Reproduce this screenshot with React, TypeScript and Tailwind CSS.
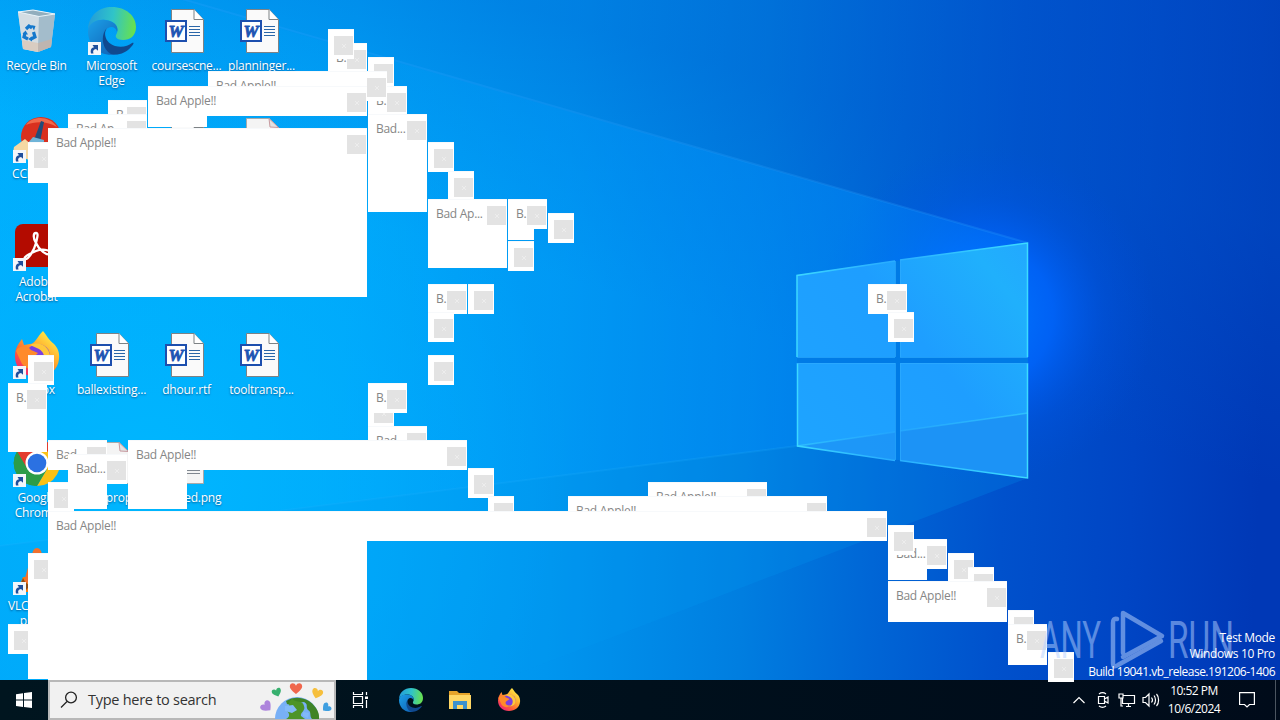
import React from 'react';

interface PopupWindow {
  x: number;
  y: number;
  w: number;
  h: number;
  title?: string;
  noButton?: boolean;
}

interface DesktopItem {
  label: string;
  icon: React.ReactNode;
  shortcut?: boolean;
}

// back to front
const windows: PopupWindow[] = [
  { x: 368, y: 57, w: 26, h: 30 },
  { x: 328, y: 43, w: 39, h: 30, title: 'B.' },
  { x: 328, y: 29, w: 26, h: 30 },
  { x: 368, y: 86, w: 39, h: 30, title: 'B.' },
  { x: 208, y: 71, w: 179, h: 30, title: 'Bad Apple!!' },
  { x: 108, y: 100, w: 39, h: 30, title: 'B.' },
  { x: 68, y: 114, w: 79, h: 30, title: 'Bad Ap...' },
  { x: 148, y: 86, w: 59, h: 41, noButton: true },
  { x: 148, y: 86, w: 219, h: 30, title: 'Bad Apple!!' },
  { x: 28, y: 142, w: 26, h: 41 },
  { x: 48, y: 128, w: 319, h: 169, title: 'Bad Apple!!' },
  { x: 368, y: 114, w: 59, h: 98, title: 'Bad...' },
  { x: 428, y: 142, w: 26, h: 30 },
  { x: 448, y: 171, w: 26, h: 30 },
  { x: 428, y: 199, w: 79, h: 69, title: 'Bad Ap...' },
  { x: 508, y: 199, w: 26, h: 41, noButton: true },
  { x: 508, y: 199, w: 39, h: 30, title: 'B.' },
  { x: 548, y: 213, w: 26, h: 30 },
  { x: 508, y: 241, w: 26, h: 30 },
  { x: 428, y: 284, w: 39, h: 30, title: 'B.' },
  { x: 468, y: 284, w: 26, h: 30 },
  { x: 868, y: 284, w: 39, h: 30, title: 'B.' },
  { x: 428, y: 312, w: 26, h: 30 },
  { x: 888, y: 312, w: 26, h: 30 },
  { x: 28, y: 355, w: 26, h: 30 },
  { x: 428, y: 355, w: 26, h: 30 },
  { x: 8, y: 383, w: 39, h: 69, title: 'B.' },
  { x: 368, y: 397, w: 26, h: 30 },
  { x: 368, y: 383, w: 39, h: 30, title: 'B.' },
  { x: 368, y: 426, w: 59, h: 30, title: 'Bad...' },
  { x: 48, y: 440, w: 59, h: 30, title: 'Bad...' },
  { x: 128, y: 440, w: 59, h: 69, noButton: true },
  { x: 128, y: 440, w: 339, h: 30, title: 'Bad Apple!!' },
  { x: 48, y: 482, w: 26, h: 30 },
  { x: 68, y: 454, w: 39, h: 55, noButton: true },
  { x: 68, y: 454, w: 59, h: 30, title: 'Bad...' },
  { x: 468, y: 468, w: 26, h: 30 },
  { x: 648, y: 482, w: 119, h: 30, title: 'Bad Apple!!' },
  { x: 488, y: 496, w: 26, h: 30 },
  { x: 568, y: 496, w: 259, h: 30, title: 'Bad Apple!!' },
  { x: 8, y: 624, w: 26, h: 30 },
  { x: 28, y: 553, w: 26, h: 126 },
  { x: 48, y: 511, w: 319, h: 169, noButton: true },
  { x: 48, y: 511, w: 839, h: 30, title: 'Bad Apple!!' },
  { x: 888, y: 539, w: 39, h: 41, noButton: true },
  { x: 888, y: 539, w: 59, h: 30, title: 'Bad...' },
  { x: 888, y: 525, w: 26, h: 30 },
  { x: 948, y: 553, w: 26, h: 30 },
  { x: 968, y: 567, w: 26, h: 30 },
  { x: 888, y: 581, w: 119, h: 41, title: 'Bad Apple!!' },
  { x: 1008, y: 610, w: 26, h: 30 },
  { x: 1008, y: 624, w: 39, h: 41, title: 'B.' },
  { x: 1048, y: 652, w: 26, h: 30 },
];

function Popup({ x, y, w, h, title, noButton }: PopupWindow) {
  return (
    <div
      className="absolute overflow-hidden border-t border-[#f7f9fb] bg-white"
      style={{ left: x, top: y, width: w, height: h }}
    >
      <div className="flex items-start justify-between pt-[6px] pr-px">
        <span className="-mt-px w-0 indent-2 text-[12px] leading-[17px] tracking-[-0.28px] whitespace-nowrap text-[#868686]">
          {title}
        </span>
        {!noButton && (
          <span className="flex h-[19px] w-[19px] shrink-0 items-center justify-center bg-[#e3e3e3]">
            <svg viewBox="0 0 6 6" className="h-[6px] w-[6px]" stroke="#ededed" fill="none">
              <path d="M1 1l4 4M5 1L1 5" />
            </svg>
          </span>
        )}
      </div>
    </div>
  );
}

function Wallpaper() {
  return (
    <svg viewBox="0 0 1280 720" className="absolute inset-0 h-[720px] w-[1280px]">
      <defs>
        <linearGradient id="base" x1="0" y1="0" x2="1280" y2="60" gradientUnits="userSpaceOnUse">
          <stop offset="0" stopColor="#00aefd" />
          <stop offset="0.28" stopColor="#00a6f9" />
          <stop offset="0.45" stopColor="#0096ef" />
          <stop offset="0.6" stopColor="#007ee0" />
          <stop offset="0.7" stopColor="#0066d6" />
          <stop offset="0.8" stopColor="#0051cc" />
          <stop offset="0.9" stopColor="#0045c4" />
          <stop offset="1" stopColor="#0038b6" />
        </linearGradient>
        <linearGradient id="topShade" x1="500" y1="0" x2="430" y2="240" gradientUnits="userSpaceOnUse">
          <stop offset="0" stopColor="#0058cc" stopOpacity="0.35" />
          <stop offset="1" stopColor="#0058cc" stopOpacity="0" />
        </linearGradient>
        <radialGradient id="leftGlow" cx="150" cy="480" r="420" gradientUnits="userSpaceOnUse">
          <stop offset="0" stopColor="#00b8ff" stopOpacity="0.9" />
          <stop offset="1" stopColor="#00b0ff" stopOpacity="0" />
        </radialGradient>
        <radialGradient id="logoGlow" cx="985" cy="315" r="170" gradientUnits="userSpaceOnUse">
          <stop offset="0" stopColor="#0078ff" />
          <stop offset="0.4" stopColor="#0066ff" stopOpacity="0.8" />
          <stop offset="0.7" stopColor="#0058ec" stopOpacity="0.3" />
          <stop offset="1" stopColor="#0050e0" stopOpacity="0" />
        </radialGradient>
        <linearGradient id="beam" x1="200" y1="0" x2="1028" y2="0" gradientUnits="userSpaceOnUse">
          <stop offset="0" stopColor="#00b4ff" stopOpacity="0.1" />
          <stop offset="0.6" stopColor="#0096ff" stopOpacity="0.7" />
          <stop offset="0.8" stopColor="#0090ff" stopOpacity="0.8" />
          <stop offset="1" stopColor="#0078ff" stopOpacity="0.6" />
        </linearGradient>
        <linearGradient id="pane" x1="797" y1="450" x2="1028" y2="260" gradientUnits="userSpaceOnUse">
          <stop offset="0" stopColor="#1ea4ff" />
          <stop offset="0.55" stopColor="#1e9eff" />
          <stop offset="0.88" stopColor="#20b0fc" />
          <stop offset="1" stopColor="#22aafe" />
        </linearGradient>
        <linearGradient id="edge" x1="797" y1="0" x2="1028" y2="0" gradientUnits="userSpaceOnUse">
          <stop offset="0" stopColor="#3cd8ff" />
          <stop offset="0.4" stopColor="#28acff" />
          <stop offset="1" stopColor="#3cdcff" />
        </linearGradient>
      </defs>
      <rect width="1280" height="720" fill="url(#base)" />
      <rect width="1280" height="720" fill="url(#topShade)" />
      <rect width="1280" height="720" fill="url(#leftGlow)" />
      <rect width="1280" height="720" fill="url(#logoGlow)" />
      <path d="M180 0L1028 243V478L797 446L0 546V0Z" fill="url(#beam)" opacity="0.6" />
      <path d="M130 -16L1028 243" stroke="#2aa4ff" strokeOpacity="0.25" strokeWidth="2" />
      <path d="M0 546L797 446" stroke="#2ab4ff" strokeOpacity="0.2" strokeWidth="2" />
      <path d="M797 446L1028 478L610 638L395 720H0V546Z" fill="#009af0" opacity="0.22" />
      <path d="M797 275L1028 243V478L797 446Z" fill="#007be6" />
      <path d="M797 275L895 261V357H797Z" fill="url(#pane)" />
      <path d="M900 260L1028 243V357H900Z" fill="url(#pane)" />
      <path d="M797 363H895V460L797 446Z" fill="url(#pane)" />
      <path d="M900 363H1028V478L900 460Z" fill="url(#pane)" />
      <path d="M797 446L895 432V460Z" fill="#1c90f4" opacity="0.6" />
      <path d="M900 431L1028 413V478L900 460Z" fill="#1c90f4" opacity="0.8" />
      <g stroke="url(#edge)" strokeWidth="1.5" fill="none">
        <path d="M895 261L797 275.500V357" />
        <path d="M900 260L1027.500 243V357" />
        <path d="M797.500 363V446L895 460.500" />
        <path d="M1027.500 363V478L900 460.500" />
        <path d="M797 446L895 432M900 431L1028 413" opacity="0.55" />
      </g>
      <g stroke="#2eacff" strokeWidth="1" opacity="0.7">
        <path d="M797 357.500H895M900 357.500H1028M797 363.500H895M900 363.500H1028" />
        <path d="M895.500 261V357M900.500 260V357M895.500 363V460M900.500 363V460" />
      </g>
    </svg>
  );
}

function RecycleBinIcon() {
  return (
    <svg viewBox="0 0 48 48" className="h-12 w-12">
      <path d="M5 5L20 3L42 7L38 40L25 45L10 42Z" fill="#b9d3e2" />
      <path d="M5 5L26 9L25 45L10 42Z" fill="#d3dde3" />
      <path d="M26 9L42 7L38 40L25 45Z" fill="#a3bccb" />
      <path d="M9 33L25 36L24.800 45L10 42Z" fill="#d9c8b8" opacity="0.8" />
      <path d="M25 36L39 32L38 40L25 45Z" fill="#c4b3a9" opacity="0.8" />
      <path d="M5 5L20 3L42 7L26 9.500Z" fill="#92aebd" stroke="#e9f4fa" strokeWidth="1" />
      <g fill="none" stroke="#1478cc" strokeWidth="3.200">
        <path d="M13 22L16 19L19 21" />
        <path d="M20.500 25L22 30L18 32" />
        <path d="M15 32L11 30L12 26" />
      </g>
      <path d="M18 18l4.500 1-1.500 4.500zM19 29.500v5l-4-2.500zM9.500 27l3-3.500 2.500 4z" fill="#1478cc" />
    </svg>
  );
}

function EdgeIcon({ id, className }: { id: string; className: string }) {
  return (
    <svg viewBox="0 0 48 48" className={className}>
      <defs>
        <linearGradient id={`${id}-top`} x1="2" y1="14" x2="46" y2="20" gradientUnits="userSpaceOnUse">
          <stop offset="0" stopColor="#249fd8" />
          <stop offset="0.5" stopColor="#30c4c8" />
          <stop offset="1" stopColor="#66e052" />
        </linearGradient>
        <linearGradient id={`${id}-low`} x1="0" y1="18" x2="30" y2="48" gradientUnits="userSpaceOnUse">
          <stop offset="0" stopColor="#1b9be4" />
          <stop offset="1" stopColor="#0f5fb4" />
        </linearGradient>
      </defs>
      <path d="M0 22C1 8 11 0 24 0C38 0 48 9 48 20C48 29 42 33 35 33C29 33 27 30 28 28C32 22 28 14 18 13C9 12 2 17 0 22Z" fill={`url(#${id}-top)`} />
      <path d="M0 24C1 16 8 12 17 13C27 14 31 20 29 25C28 20 22 18 18 23C12 31 18 45 30 47C12 51 0 39 0 24Z" fill={`url(#${id}-low)`} />
      <path d="M19 21C15 26 17 36 27 39C34 41 40 39 44 36C47 35 45 38 43 40C38 46 30 49 23 47C14 42 12 28 19 21Z" fill="#10498f" />
    </svg>
  );
}

function WordIcon() {
  return (
    <svg viewBox="0 0 48 48" className="h-12 w-12">
      <path d="M8.500 2.500H31L40.500 12.500V45.500H8.500Z" fill="#fafafa" stroke="#7d8285" />
      <path d="M31 2.500V12.500H40.500" fill="#fff" stroke="#7d8285" />
      <path d="M26 19.500H37M26 22.500H37M26 25.500H37M26 28.500H37" stroke="#2a66a8" />
      <rect x="3" y="14" width="20" height="20" fill="#fff" stroke="#1d4fae" strokeWidth="2" />
      <text x="13" y="30" textAnchor="middle" fontFamily="Liberation Serif, serif" fontSize="17" fontWeight="700" fontStyle="italic" fill="#1e55b3" stroke="#1e55b3" strokeWidth="0.800">W</text>
    </svg>
  );
}

function ImageFileIcon() {
  return (
    <svg viewBox="0 0 48 48" className="h-12 w-12">
      <path d="M8.500 3.500H31L40.500 12.500V44.500H8.500Z" fill="#f4f4f4" stroke="#a9a9a9" />
      <path d="M31 3.500L32 12L40.500 12.500Z" fill="#e2e2e2" stroke="#c79aa0" />
      <path d="M12 31.500H37M12 34.500H37" stroke="#80878f" />
    </svg>
  );
}

function CCleanerIcon() {
  return (
    <svg viewBox="0 0 48 48" className="h-12 w-12">
      <circle cx="28" cy="22" r="20" fill="#d9301f" />
      <path d="M13 10C19 1 36 0 44 12C35 6 22 6 13 10Z" fill="#f06a4c" />
      <path d="M28 6L21 25L27 27L31 7Z" fill="#224c79" />
      <path d="M20 22L31 25L30 36L10 34Z" fill="#6fb4d8" />
      <path d="M1 32L12 24L24 35L18 46L0 38Z" fill="#f5d9a4" />
    </svg>
  );
}

function AcrobatIcon() {
  return (
    <svg viewBox="0 0 48 48" className="h-12 w-12">
      <rect x="2" y="1" width="45" height="43" rx="8" fill="#b30b00" />
      <path d="M23 10C20 10 20 15 23 20C26 27 34 33 37 31C40 28 31 25 23 28C16 31 10 34 12 36C15 37 21 28 23 20C24 15 26 10 23 10Z" fill="none" stroke="#fff" strokeWidth="2.300" />
    </svg>
  );
}

function FirefoxIcon({ id, className }: { id: string; className: string }) {
  return (
    <svg viewBox="0 0 48 48" className={className}>
      <defs>
        <linearGradient id={id} x1="40" y1="4" x2="8" y2="42" gradientUnits="userSpaceOnUse">
          <stop offset="0" stopColor="#fff04a" />
          <stop offset="0.4" stopColor="#ffa72c" />
          <stop offset="0.7" stopColor="#ff5f35" />
          <stop offset="1" stopColor="#f0247a" />
        </linearGradient>
      </defs>
      <path d="M30 0C34 5 36 9 41 13C44 16 47 21 46 28C45 39 36 46 24 46C11 46 2 37 2 25C2 18 5 13 9 8L11 14L17 13C22 13 24 6 30 0Z" fill={`url(#${id})`} />
      <circle cx="25" cy="25" r="12" fill="#7c3fe0" />
      <path d="M17 14C26 10 35 14 37 24C38 33 31 38 24 37C33 34 34 23 26 18Z" fill="#ffc83a" />
      <path d="M3 20C6 14 14 14 18 19L25 22C22 26 18 25 17 29C17 34 23 36 28 34C24 40 14 40 9 33Z" fill="#ff8a2a" />
    </svg>
  );
}

function ChromeIcon() {
  return (
    <svg viewBox="0 0 48 48" className="h-12 w-12">
      <path d="M24 24L4 12.500A23 23 0 0 1 44 12.500Z" fill="#e33b2e" />
      <path d="M24 24L4 12.500A23 23 0 0 0 24 47Z" fill="#2c9c48" />
      <path d="M24 24L34 30L24 47A23 23 0 0 0 44 12.500H24Z" fill="#fbc116" />
      <path d="M24 24L14 30L4 12.500L24 12.500Z" fill="#e33b2e" />
      <path d="M4 12.500L14.500 30L24 35L34 30L24 47A23 23 0 0 1 4 12.500Z" fill="#2c9c48" />
      <circle cx="24" cy="24" r="11.500" fill="#fff" />
      <circle cx="24" cy="24" r="9.300" fill="#2b71e2" />
    </svg>
  );
}

function VlcIcon() {
  return (
    <svg viewBox="0 0 48 48" className="h-12 w-12">
      <path d="M10 30H38L44 45H4Z" fill="#f57c10" />
      <path d="M24 1C26 1 27 2 28 4L37 34C30 40 18 40 11 34L20 4C21 2 22 1 24 1Z" fill="#f0712e" />
      <path d="M18 13H30L33 22H15Z" fill="#eee" />
      <path d="M10 31C12 36 16 38 17 39L13 43L7 38Z" fill="#8c4b16" />
    </svg>
  );
}

const items: (DesktopItem | null)[] = [
  { label: 'Recycle Bin', icon: <RecycleBinIcon /> },
  { label: 'Microsoft Edge', icon: <EdgeIcon id="edge-desktop" className="h-12 w-12" />, shortcut: true },
  { label: 'coursescne...', icon: <WordIcon /> },
  { label: 'planninger...', icon: <WordIcon /> },
  { label: 'CCleaner', icon: <CCleanerIcon />, shortcut: true },
  null,
  { label: '', icon: <WordIcon /> },
  { label: '', icon: <ImageFileIcon /> },
  { label: 'Adobe Acrobat', icon: <AcrobatIcon />, shortcut: true },
  null,
  null,
  null,
  { label: 'Firefox', icon: <FirefoxIcon id="fox-desktop" className="h-12 w-12" />, shortcut: true },
  { label: 'ballexisting...', icon: <WordIcon /> },
  { label: 'dhour.rtf', icon: <WordIcon /> },
  { label: 'tooltransp...', icon: <WordIcon /> },
  { label: 'Google Chrome', icon: <ChromeIcon />, shortcut: true },
  { label: 'loanprop...', icon: <ImageFileIcon /> },
  { label: 'released.png', icon: <ImageFileIcon /> },
  null,
  { label: 'VLC media player', icon: <VlcIcon />, shortcut: true },
];

function DesktopIcon({ label, icon, shortcut }: DesktopItem) {
  return (
    <div className="flex flex-col items-center pt-[7px]">
      <div className="relative h-12 w-12">
        {icon}
        {shortcut && (
          <span className="absolute top-[35px] left-0 flex h-[13px] w-[13px] items-center justify-center bg-[#f3f6fa]">
            <svg viewBox="0 0 10 10" className="h-[10px] w-[10px]">
              <path d="M2 9.500C1 5 3 3.500 5 3.200L3.500 1H9V6.800L7 5C4.500 5.500 3.500 7 4.500 9.500Z" fill="#1f4f9c" />
            </svg>
          </span>
        )}
      </div>
      <p className="mt-[3px] w-[74px] text-center text-[12px] leading-[15px] tracking-[-0.22px] text-white [text-shadow:0_1px_2px_rgba(0,40,90,0.6)]">
        {label}
      </p>
    </div>
  );
}

function Watermark() {
  return (
    <svg viewBox="0 0 200 64" className="absolute top-[608px] left-[1038px] h-16 w-[200px] opacity-50">
      <g fill="#b4d0ff" fontFamily="Roboto, sans-serif" fontSize="51" fontWeight="400">
        <text x="2" y="50" textLength="61" lengthAdjust="spacingAndGlyphs">ANY</text>
        <text x="130" y="50" textLength="66" lengthAdjust="spacingAndGlyphs">RUN</text>
      </g>
      <g fill="none" stroke="#c2d9ff" strokeWidth="4.500" strokeLinejoin="round" strokeLinecap="round">
        <path d="M85 45V5L124 28L85 49" />
        <path d="M79 11C76 10 75 12 75 15V55C75 59 77 59 80 57L123 33" />
      </g>
    </svg>
  );
}

const HEART = 'M0 4.500C-5 0.500-5.500-1-5.500-2.500C-5.500-6-1-6 0-3C1-6 5.500-6 5.500-2.500C5.500-1 5 0.500 0 4.500Z';

function EarthArt() {
  return (
    <svg viewBox="0 0 76 38" className="h-[38px] w-[76px] shrink-0 translate-x-px">
      <circle cx="38" cy="38" r="22" fill="#78b0f6" />
      <path d="M27 20C36 14 50 16 57 27C61 33 60 38 60 38H53C50 35 53 31 49 29C46 25 50 24 45 21C39 21 35 25 28 23Z" fill="#3f8426" />
      <path d="M33 18C38 22 44 19 45 25C47 30 41 31 42 35L46 38H27C31 36 31 33 28 30C33 26 27 22 33 18Z" fill="#4d9428" />
      <path d="M26 25L34 24L38 29L33 32L26 30ZM44 31L50 32L49 37L44 35Z" fill="#82baf8" />
      <path d={HEART} transform="translate(37 8) scale(1.120)" fill="#f0664c" />
      <path d={HEART} transform="translate(18 12) rotate(-20) scale(.850)" fill="#37b06e" />
      <path d={HEART} transform="translate(58 13) rotate(18)" fill="#f6bf3c" />
      <path d={HEART} transform="translate(8 26) rotate(-45) scale(1.050)" fill="#ad84dc" />
      <path d={HEART} transform="translate(67 27) rotate(50) scale(.850)" fill="#3f9fe0" />
    </svg>
  );
}

function Taskbar() {
  return (
    <footer className="relative flex h-10 w-[1280px] bg-gradient-to-r from-[#00151f] via-[#00101c] to-[#000b1a] text-white">
      <div className="flex w-12 items-center justify-center">
        <svg viewBox="0 0 16 16" className="h-4 w-4" fill="#fff">
          <path d="M0 2.200L7 1.200V7.600H0ZM8 1.100L16 0V7.600H8ZM0 8.500H7V14.900L0 13.900ZM8 8.500H16V16L8 15Z" />
        </svg>
      </div>
      <div className="flex w-72 items-center border-2 border-[#b8b8b8] bg-[#f1f1f1] pl-[10px]">
        <svg viewBox="0 0 18 18" className="h-[18px] w-[18px] shrink-0" fill="none" stroke="#222" strokeWidth="1.300">
          <circle cx="11" cy="6.500" r="5.400" />
          <path d="M7 10.500L1 16.500" />
        </svg>
        <span className="ml-[10px] w-[171px] text-[14.5px] leading-5 tracking-[-0.27px] text-[#333]">
          Type here to search
        </span>
        <EarthArt />
      </div>
      <div className="flex items-center">
        <div className="flex w-12 justify-center">
          <svg viewBox="0 0 16 16" className="h-4 w-4" fill="none" stroke="#fff" strokeWidth="1.200">
            <path d="M1.500 4.500H10.500V11.500H1.500ZM1.500 0V2.500H10.500V0M1.500 16V13.500H10.500V16M14.500 0V3M14.500 8V16" />
            <path d="M13 4.500H16V7H13Z" fill="#fff" stroke="none" />
          </svg>
        </div>
        <div className="flex w-[54px] justify-center">
          <EdgeIcon id="edge-bar" className="h-6 w-6" />
        </div>
        <div className="flex w-[44px] justify-center">
          <svg viewBox="0 0 22 20" className="h-5 w-[22px]">
            <path d="M0 1H8L10 3H21V8H0Z" fill="#e6a42a" />
            <path d="M0 5H22V19H0Z" fill="#ffd765" />
            <path d="M4 19V11H18V19H14V15H8V19Z" fill="#3c91cf" />
          </svg>
        </div>
        <div className="flex w-[53px] justify-center">
          <FirefoxIcon id="fox-bar" className="h-6 w-6" />
        </div>
      </div>
      <div className="ml-auto flex items-center">
        <svg viewBox="0 0 12 8" className="h-2 w-3" fill="none" stroke="#fff" strokeWidth="1.200">
          <path d="M0.500 7L6 1.500L11.500 7" />
        </svg>
        <svg viewBox="0 0 12 16" className="ml-3 h-4 w-3" fill="none" stroke="#fff" strokeWidth="1.200">
          <path d="M1.500 4.500H7.500V11.500H1.500ZM7.500 7L11 5V11L7.500 9M2 2C4 .5 7 .5 9 2M2 14C4 15.500 7 15.500 9 14" />
        </svg>
        <svg viewBox="0 0 18 16" className="ml-[9px] h-4 w-[18px]" fill="none" stroke="#fff" strokeWidth="1.200">
          <path d="M5 3.500H16.500V11.500H4.500V6M8 14.500H13M10.500 11.500V14.500M1 2H5V6H1ZM3 6V14H5" />
        </svg>
        <svg viewBox="0 0 18 16" className="ml-[6px] h-4 w-[18px]" fill="none" stroke="#fff" strokeWidth="1.200">
          <path d="M1 5.500H3.500L7 2V14L3.500 10.500H1ZM9.500 5.500C10.700 7 10.700 9 9.500 10.500M12 3.500C14 6 14 10 12 12.500M14.500 2C17.300 5 17.300 11 14.500 14" />
        </svg>
        <div className="ml-[4px] w-[60px] text-center text-[12px] leading-[18px] tracking-[-0.5px] whitespace-nowrap">
          <p>10:52 PM</p>
          <p>10/6/2024</p>
        </div>
        <svg viewBox="0 0 16 16" className="mr-5 ml-[15px] h-4 w-4" fill="none" stroke="#fff" strokeWidth="1.200">
          <path d="M.6 .6H15.400V12.500H10.500L8 15L5.500 12.500H.6Z" />
        </svg>
        <div className="mr-1 h-10 w-px bg-[#4b5560]" />
      </div>
    </footer>
  );
}

export default function App() {
  return (
    <div className="relative flex h-[720px] w-[1280px] flex-col overflow-hidden bg-[#0078d7] font-['Open_Sans','Noto_Sans',sans-serif]">
      <Wallpaper />
      <main className="relative -ml-px grid h-[680px] auto-rows-[108px] grid-cols-[repeat(4,75px)] overflow-hidden">
        {items.map((item, i) => (item ? <DesktopIcon key={i} {...item} /> : <div key={i} />))}
      </main>
      <Taskbar />
      {windows.map((win, i) => (
        <Popup key={i} {...win} />
      ))}
      <Watermark />
      <div className="absolute top-[630px] right-[5px] text-right text-[12px] leading-4 tracking-[-0.35px] whitespace-nowrap text-white">
        <p>Test Mode</p>
        <p>Windows 10 Pro</p>
        <p className="mt-[2px] tracking-[-0.5px]">Build 19041.vb_release.191206-1406</p>
      </div>
    </div>
  );
}
